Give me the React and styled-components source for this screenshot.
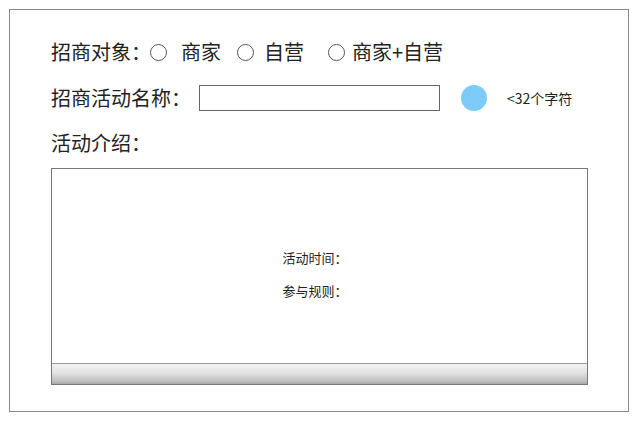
import React from 'react'
import styled, { createGlobalStyle } from 'styled-components'

const GlobalStyle = createGlobalStyle`
  html, body {
    margin: 0;
    padding: 0;
    background: #fff;
  }
  body {
    font-family: "Noto Sans CJK SC", "Noto Sans", sans-serif;
    color: #222;
  }
`

const Frame = styled.div`
  box-sizing: border-box;
  margin: 9px 0 0 9px;
  width: 620px;
  height: 403px;
  border: 1px solid #8a8a8a;
  padding: 29px 0 0 41px;
  display: flex;
  flex-direction: column;
`

const Row = styled.div`
  display: flex;
  align-items: center;
  height: 26px;
  margin-bottom: ${p => p.$gap}px;
`

const Label = styled.span`
  font-size: 20px;
  line-height: 26px;
  white-space: nowrap;
`

const Option = styled.label`
  display: flex;
  align-items: center;
  gap: ${p => p.$gap}px;
  margin-left: ${p => p.$offset}px;
  font-size: 20px;
  line-height: 26px;
  white-space: nowrap;
`

const Radio = styled.span`
  box-sizing: border-box;
  width: 17px;
  height: 17px;
  border: 1px solid #555;
  border-radius: 50%;
  background: #fff;
`

const TextInput = styled.div`
  box-sizing: border-box;
  width: 241px;
  height: 26px;
  margin-left: 8px;
  border: 1px solid #666;
  background: #fff;
`

const Dot = styled.span`
  width: 26px;
  height: 26px;
  margin-left: 21px;
  border-radius: 50%;
  background: #7ccbf8;
`

const Hint = styled.span`
  margin-left: 20px;
  font-size: 14px;
  white-space: nowrap;
`

const Editor = styled.div`
  box-sizing: border-box;
  width: 537px;
  height: 217px;
  border: 1px solid #777;
  display: flex;
  flex-direction: column;
  background: #fff;
`

const Body = styled.div`
  flex: 1;
  display: flex;
  flex-direction: column;
  align-items: center;
  padding-top: 72px;
  padding-right: 8px;
`

const Line = styled.div`
  font-size: 13px;
  line-height: 33px;
  width: 66px;
  white-space: nowrap;
`

const Bar = styled.div`
  height: 20px;
  border-top: 1px solid #9a9a9a;
  background: linear-gradient(to bottom, #f3f3f3 0%, #e2e2e2 45%, #c4c4c4 80%, #a9a9a9 100%);
`

const App = () => (
  <>
    <GlobalStyle />
    <Frame>
      <Row $gap={20}>
        <Label>招商对象：</Label>
        <Option $offset={-1} $gap={14}><Radio />商家</Option>
        <Option $offset={16} $gap={10}><Radio />自营</Option>
        <Option $offset={24} $gap={7}><Radio />商家+自营</Option>
      </Row>
      <Row $gap={19}>
        <Label>招商活动名称：</Label>
        <TextInput />
        <Dot />
        <Hint>&lt;32个字符</Hint>
      </Row>
      <Row $gap={12}>
        <Label>活动介绍：</Label>
      </Row>
      <Editor>
        <Body>
          <Line>活动时间：</Line>
          <Line>参与规则：</Line>
        </Body>
        <Bar />
      </Editor>
    </Frame>
  </>
)

export default App
